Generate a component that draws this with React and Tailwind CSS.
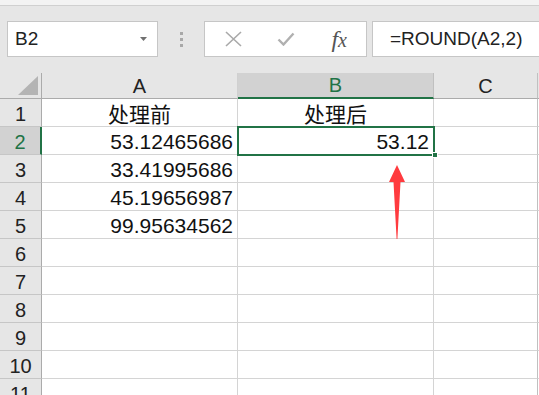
import React from "react";

const rows = [
  { n: 1, a: "处理前", b: "处理后", cjk: true },
  { n: 2, a: "53.12465686", b: "53.12" },
  { n: 3, a: "33.41995686" },
  { n: 4, a: "45.19656987" },
  { n: 5, a: "99.95634562" },
  { n: 6 }, { n: 7 }, { n: 8 }, { n: 9 }, { n: 10 }, { n: 11 },
];

const sans = { fontFamily: '"Liberation Sans", Arial, sans-serif' };
const cjk = { fontFamily: '"Noto Sans CJK SC", "Liberation Sans", sans-serif' };

export default function App() {
  return (
    <div className="relative w-[539px] h-[395px] overflow-hidden bg-white" style={sans}>
      {/* top strip */}
      <div className="h-[6px] bg-[#f3f3f3] border-b border-[#d0d0d0]" />
      {/* formula bar */}
      <div className="h-[67px] bg-[#e6e6e6] flex items-start pt-[15px] pl-[7px]">
        <div className="w-[151px] h-[36px] bg-white border border-[#c6c6c6] flex items-center justify-between pl-[7px] pr-[10px]">
          <span className="text-[19px] text-[#222]">B2</span>
          <svg width="7" height="4" viewBox="0 0 7 4"><path d="M0 0h7L3.5 4z" fill="#707070" /></svg>
        </div>
        <div className="w-[46px] h-[36px] flex flex-col items-center justify-center gap-[3px]">
          <div className="w-[3px] h-[3px] bg-[#a8a8a8]" />
          <div className="w-[3px] h-[3px] bg-[#a8a8a8]" />
          <div className="w-[3px] h-[3px] bg-[#a8a8a8]" />
        </div>
        <div className="w-[163px] h-[36px] bg-white border border-[#c6c6c6] flex items-center">
          <div className="w-[54px] flex justify-center pl-[3px]">
            <svg width="17" height="16" viewBox="0 0 17 16"><path d="M1 1L16 15M16 1L1 15" stroke="#a9a9a9" strokeWidth="1.6" /></svg>
          </div>
          <div className="w-[54px] flex justify-center">
            <svg width="18" height="14" viewBox="0 0 18 14"><path d="M1.5 7.5L6.5 12.5L16.5 1.5" stroke="#b0b0b0" strokeWidth="2.4" fill="none" /></svg>
          </div>
          <div className="w-[54px] flex justify-center">
            <span className="italic text-[#555] leading-none" style={{ fontFamily: '"Liberation Serif", serif' }}>
              <span className="text-[24px]">f</span><span className="text-[20px]">x</span>
            </span>
          </div>
        </div>
        <div className="ml-[5px] flex-1 h-[36px] bg-white border border-[#c6c6c6] border-r-0 flex items-center pl-[17px]">
          <span className="text-[19px] text-[#222]">=ROUND(A2,2)</span>
        </div>
      </div>
      {/* column header */}
      <div className="flex h-[26px] bg-[#e6e6e6]">
        <div className="w-[42px] h-full border-r border-[#ababab] border-b border-b-[#ababab] flex items-end justify-end pr-[3px] pb-[3px]">
          <svg width="20" height="19" viewBox="0 0 20 19"><path d="M20 0V19H0z" fill="#b4b4b4" /></svg>
        </div>
        <div className="w-[196px] h-full border-r border-[#d0d0d0] border-b border-b-[#ababab] flex items-center justify-center text-[20px] text-[#222]">A</div>
        <div className="w-[196px] h-full bg-[#d2d2d2] border-r border-[#c0c0c0] border-b-2 border-b-[#217346] flex items-center justify-center text-[20px] text-[#217346]">B</div>
        <div className="w-[104px] h-full border-r border-[#c0c0c0] border-b border-b-[#ababab] flex items-center justify-center text-[20px] text-[#222]">C</div>
        <div className="flex-1 border-b border-b-[#ababab]" />
      </div>
      {/* rows */}
      {rows.map((r) => {
        const sel = r.n === 2;
        return (
          <div key={r.n} className="flex h-[28px]">
            <div
              className={
                sel
                  ? "w-[42px] h-full bg-[#d2d2d2] border-r-2 border-r-[#217346] border-b border-b-[#c6c6c6] flex items-center justify-center pt-[2px] text-[20px] text-[#217346] leading-none"
                  : "w-[42px] h-full bg-[#e6e6e6] border-r border-r-[#ababab] border-b border-b-[#c6c6c6] flex items-center justify-center pt-[2px] text-[20px] text-[#222] leading-none"
              }
            >
              {r.n}
            </div>
            <div
              className={
                r.cjk
                  ? "w-[196px] h-full border-r border-b border-[#d4d4d4] flex items-center justify-center pt-[2px] text-[21px] text-[#111] leading-none"
                  : "w-[196px] h-full border-r border-b border-[#d4d4d4] flex items-center justify-end pr-[4px] pt-[2px] text-[21px] text-[#111] leading-none"
              }
              style={r.cjk ? cjk : sans}
            >
              {r.a}
            </div>
            <div
              className={
                r.cjk
                  ? "w-[196px] h-full border-r border-b border-[#d4d4d4] flex items-center justify-center pt-[2px] text-[21px] text-[#111] leading-none"
                  : "w-[196px] h-full border-r border-b border-[#d4d4d4] flex items-center justify-end pr-[4px] pt-[2px] text-[21px] text-[#111] leading-none"
              }
              style={r.cjk ? cjk : sans}
            >
              {r.b}
            </div>
            <div className="w-[104px] h-full border-r border-r-[#c0c0c0] border-b border-b-[#d4d4d4]" />
            <div className="flex-1 border-b border-b-[#d4d4d4]" />
          </div>
        );
      })}
      {/* selection border */}
      <div className="absolute left-[237px] top-[126px] w-[198px] h-[30px] border-2 border-[#217346]" />
      <div className="absolute left-[432px] top-[152px] w-[6px] h-[6px] bg-[#217346] border border-white" />
      {/* arrow */}
      <svg className="absolute left-[386px] top-[164px]" width="22" height="78" viewBox="0 0 22 78">
        <path d="M11 1L19 18H14.5L11.4 75H10.6L7.5 18H3z" fill="#ff3b3f" />
      </svg>
    </div>
  );
}
